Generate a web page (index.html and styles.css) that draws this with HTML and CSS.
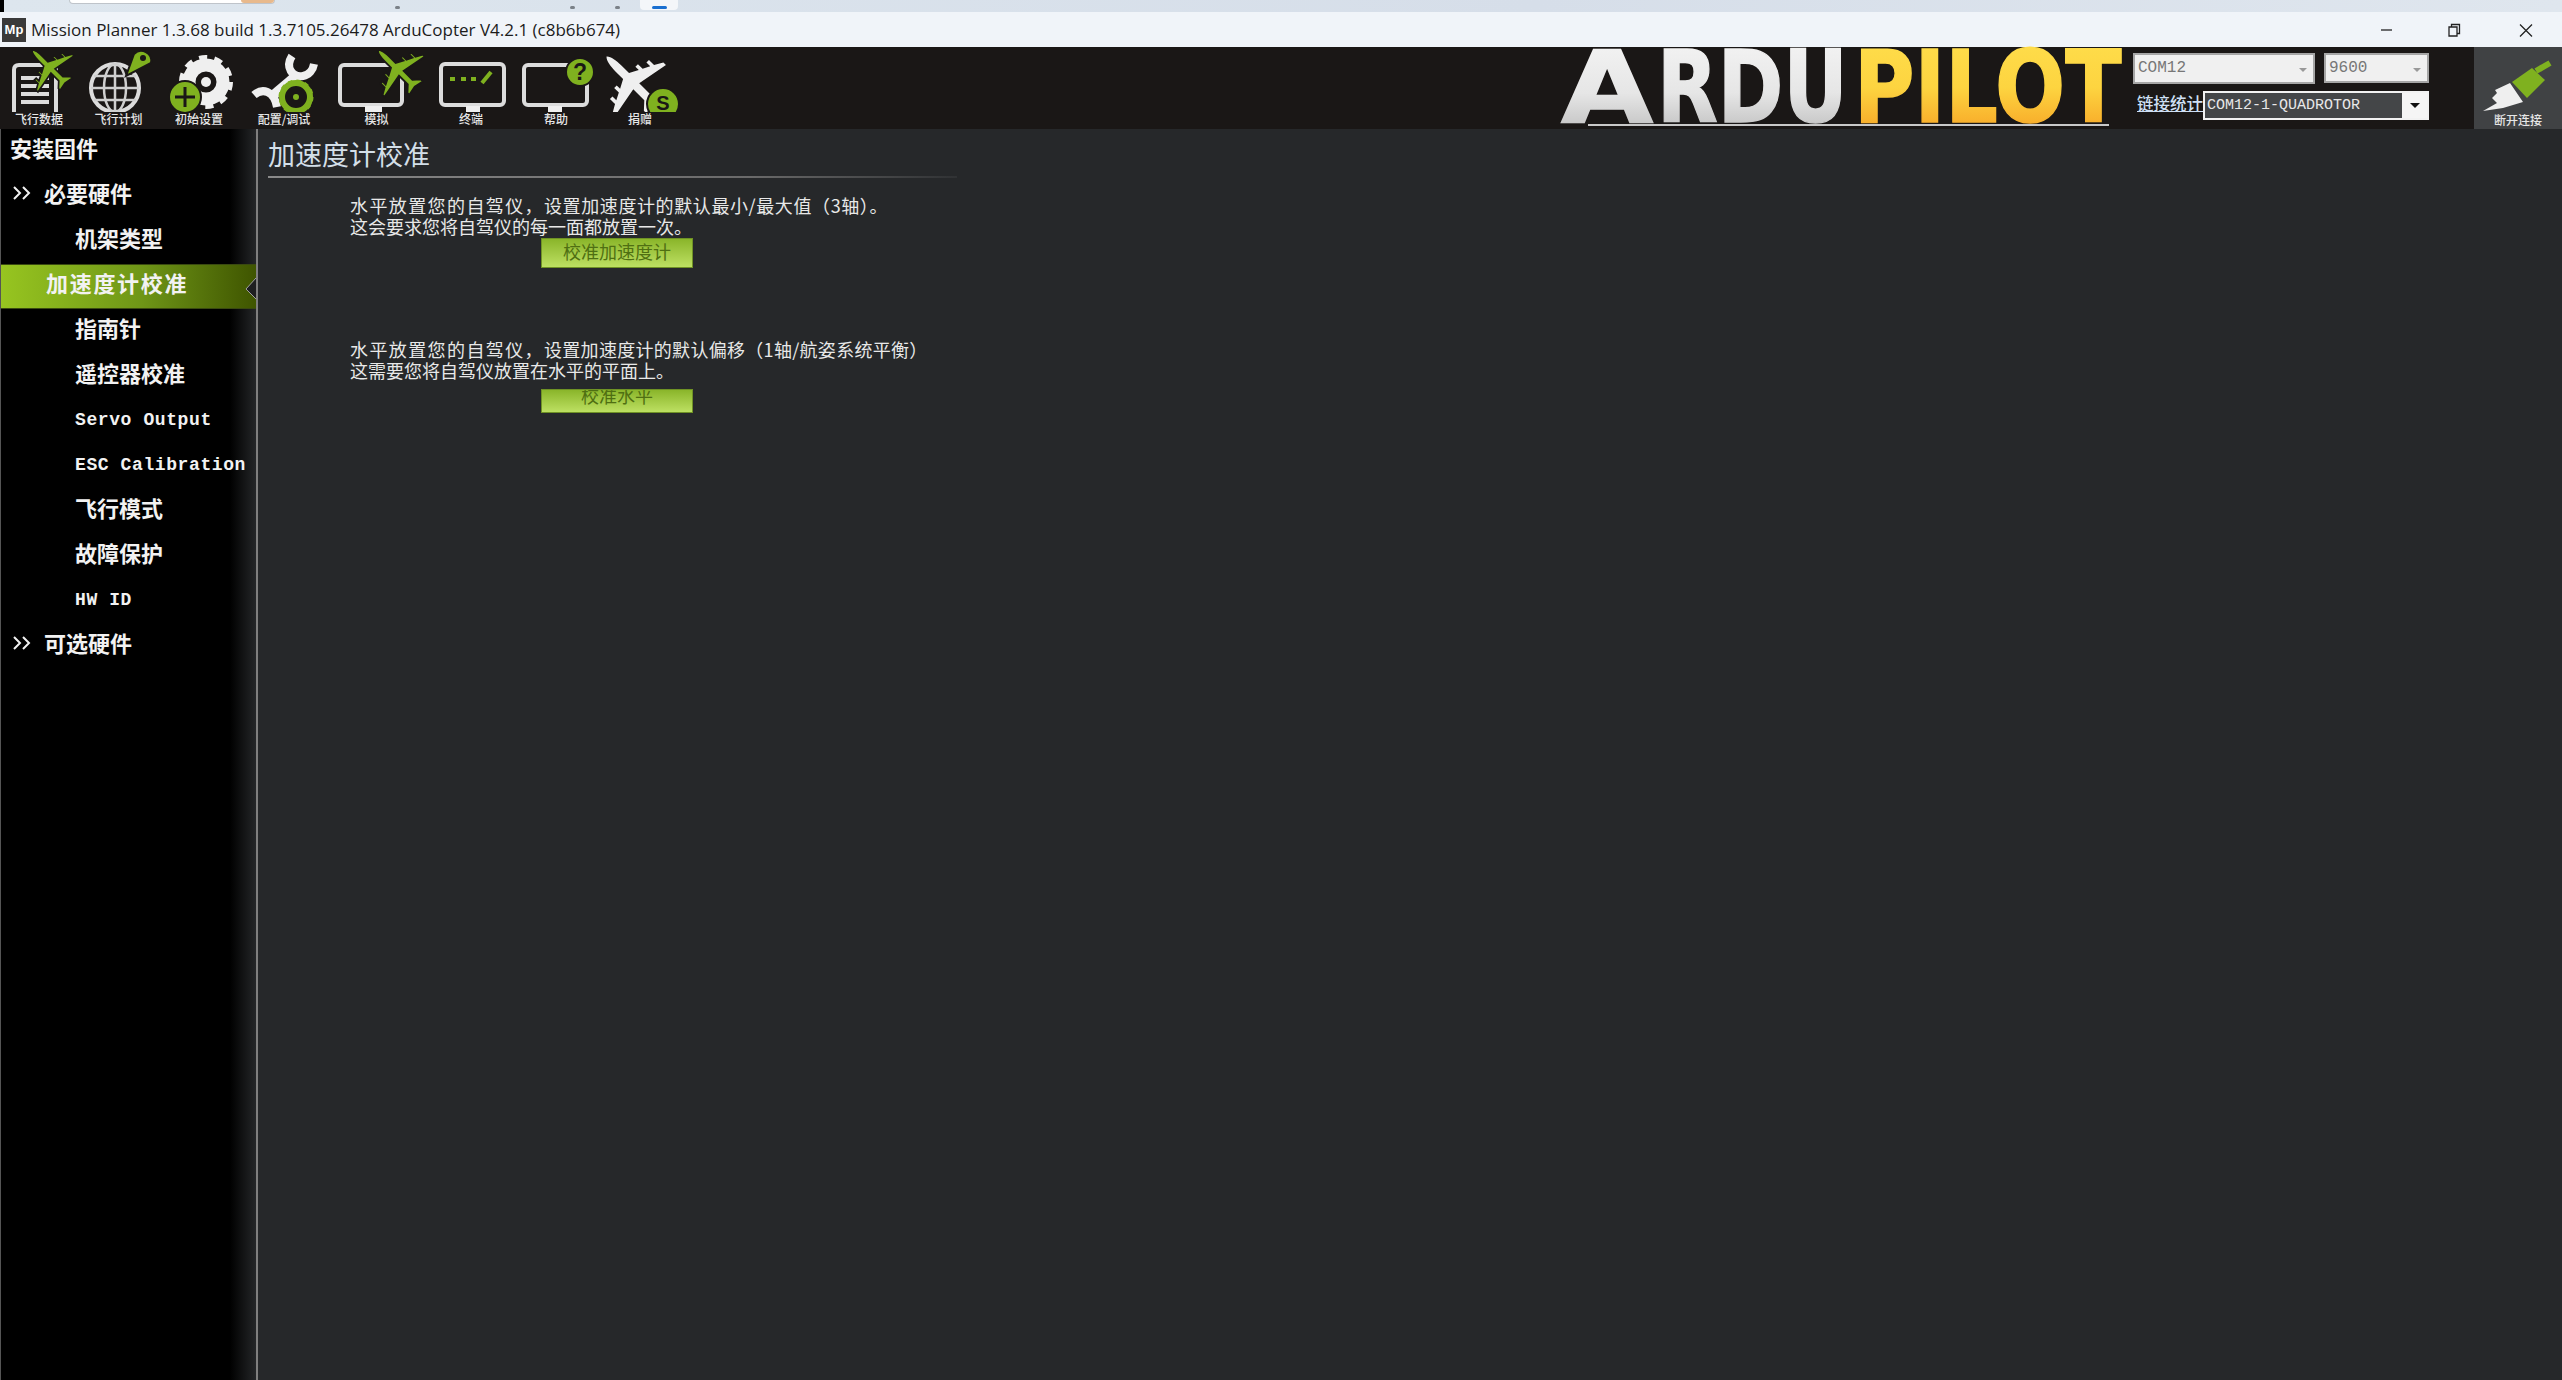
FILE: index.html
```html
<!DOCTYPE html>
<html lang="zh">
<head>
<meta charset="utf-8">
<title>Mission Planner</title>
<link rel="stylesheet" href="styles.css">
</head>
<body>
<div class="app">
  <div class="strip">
    <span class="strip-black"></span>
    <span class="strip-pill"><span class="strip-pill-end"></span></span>
    <span class="strip-dot d1"></span>
    <span class="strip-dot d2"></span>
    <span class="strip-dot d3"></span>
    <span class="strip-tile"><span class="strip-tile-bar"></span></span>
  </div>

  <div class="titlebar">
    <span class="mp-icon">Mp</span>
    <span class="title-text">Mission Planner 1.3.68 build 1.3.7105.26478 ArduCopter V4.2.1 (c8b6b674)</span>
    <span class="win-btns">
      <svg class="win-btn" viewBox="0 0 70 34"><path d="M31 17H42" stroke="#222" stroke-width="1.3"/></svg>
      <svg class="win-btn" viewBox="0 0 70 34"><path d="M29 14h8v9h-8zM31.500 14v-2.500h8v9H37" fill="none" stroke="#222" stroke-width="1.3"/></svg>
      <svg class="win-btn" viewBox="0 0 70 34"><path d="M30 11.500L42 23.500M42 11.500L30 23.500" stroke="#222" stroke-width="1.3"/></svg>
    </span>
  </div>

  <div class="toolbar">
    <svg class="defs" width="0" height="0">
      <defs>
        <path id="plane" d="M0-30C2.500-28 3.500-22 3.500-16V-7L11-3V-7H14V-1.500L20 1.500V-3H23V3L30 7V10L3.500 5V18L10 24V27L0 25L-10 27V24L-3.500 18V5L-30 10V7L-23 3V-3H-20V1.500L-14-1.500V-7H-11V-3L-3.500-7V-16C-3.500-22-2.500-28 0-30Z"/>
        <clipPath id="icon-bottom"><rect x="594" y="47" width="92" height="65"/></clipPath>
        <linearGradient id="white-fill" x1="0" y1="0" x2="0" y2="1">
          <stop offset="0" stop-color="#f6f6f6"/><stop offset=".55" stop-color="#e6e6e6"/><stop offset="1" stop-color="#b4b4b4"/>
        </linearGradient>
        <linearGradient id="gold-fill" x1="0" y1="0" x2="0" y2="1">
          <stop offset="0" stop-color="#ffdf4d"/><stop offset=".5" stop-color="#fdd440"/><stop offset="1" stop-color="#f5981f"/>
        </linearGradient>
      </defs>
    </svg>

    <div class="tools">
      <div class="tool t1">
        <svg class="tool-icon" viewBox="0 47 78 65">
          <path d="M14 112V70Q14 65 19 65H50Q56 65 56 70V112" class="ln"/>
          <path d="M21 78H49M21 86H49M21 94H49M21 102H49" class="ln"/>
          <use href="#plane" transform="translate(50 68) rotate(-45) scale(.85)" class="gr"/>
        </svg>
        <span class="tool-label">飞行数据</span>
      </div>
      <div class="tool t2">
        <svg class="tool-icon" viewBox="78 47 81 65">
          <circle cx="115" cy="88" r="24" class="ln"/>
          <ellipse cx="115" cy="88" rx="11" ry="24" class="ln2"/>
          <path d="M115 64V112M91 88H139M94 76H136M94 100H136" class="ln2"/>
          <path d="M126 76L134 54A10 10 0 0 1 151 63Z" class="gr"/>
          <circle cx="143" cy="58" r="3" class="dk"/>
        </svg>
        <span class="tool-label">飞行计划</span>
      </div>
      <div class="tool t3">
        <svg class="tool-icon" viewBox="159 47 80 65">
          <circle cx="206" cy="82" r="17" class="gear-ring"/>
          <circle cx="206" cy="82" r="24" class="gear-teeth"/>
          <circle cx="206" cy="82" r="5" class="wh"/>
          <circle cx="185" cy="97" r="16" class="gr"/>
          <path d="M185 87V107M175 97H195" class="plus"/>
        </svg>
        <span class="tool-label">初始设置</span>
      </div>
      <div class="tool t4">
        <svg class="tool-icon" viewBox="239 47 90 65">
          <path d="M292 56C285 67 292 78 303 76C309 75 313 70 314 64" class="wr"/>
          <path d="M296 76L270 98" class="wr2"/>
          <path d="M254 95C262 88 274 90 277 107" class="wr"/>
          <circle cx="296" cy="97" r="14" class="gr-ring"/>
          <circle cx="296" cy="97" r="15" class="gr-teeth"/>
          <circle cx="296" cy="97" r="3" class="gr-solid"/>
        </svg>
        <span class="tool-label">配置/调试</span>
      </div>
      <div class="tool t5">
        <svg class="tool-icon" viewBox="329 47 95 65">
          <rect x="340" y="65" width="62" height="40" rx="4" class="ln"/>
          <rect x="365" y="106" width="17" height="7" class="wh"/>
          <use href="#plane" transform="translate(398 70) rotate(-45) scale(.95)" class="gr"/>
        </svg>
        <span class="tool-label">模拟</span>
      </div>
      <div class="tool t6">
        <svg class="tool-icon" viewBox="424 47 94 65">
          <rect x="441" y="64" width="63" height="41" rx="4" class="ln"/>
          <rect x="466" y="106" width="14" height="7" class="wh"/>
          <path d="M450 79H455M461 79H466M471 79H476" class="term"/>
          <path d="M482 83L491 72" class="term"/>
        </svg>
        <span class="tool-label">终端</span>
      </div>
      <div class="tool t7">
        <svg class="tool-icon" viewBox="518 47 76 65">
          <rect x="524" y="65" width="63" height="40" rx="4" class="ln"/>
          <rect x="548" y="106" width="14" height="7" class="wh"/>
          <circle cx="580" cy="72" r="14" class="gr"/>
          <text x="580" y="80" class="help-q">?</text>
        </svg>
        <span class="tool-label">帮助</span>
      </div>
      <div class="tool t8">
        <svg class="tool-icon open" viewBox="594 47 92 65">
          <g clip-path="url(#icon-bottom)">
            <use href="#plane" transform="translate(632 82) rotate(-45) scale(1.2)" class="wh"/>
            <circle cx="663" cy="104" r="16" class="gr"/>
          </g>
          <text x="663" y="110" class="help-s">S</text>
        </svg>
        <span class="tool-label">捐赠</span>
      </div>
    </div>

    <svg class="logo" viewBox="1555 47 575 82">
      <text transform="translate(1561 122) scale(1.19 1)" class="logo-a">A</text>
      <text transform="translate(1657 122) scale(.79 1)" class="logo-a">RDU</text>
      <text transform="translate(1854 122) scale(.826 1)" class="logo-b">PILOT</text>
      <path d="M1588 125H2109" class="logo-line"/>
    </svg>

    <div class="ports">
      <div class="port-row">
        <div class="select com"><span>COM12</span><i class="caret"></i></div>
        <div class="select baud"><span>9600</span><i class="caret"></i></div>
      </div>
      <div class="port-row link-row">
        <span class="link-stats">链接统计</span>
        <div class="combo"><span class="combo-text">COM12-1-QUADROTOR</span><span class="combo-btn"><i class="combo-caret"></i></span></div>
      </div>
    </div>

    <div class="connect">
      <svg class="connect-icon" viewBox="0 0 88 66">
        <path d="M36 36L49 55L29 61L9 64L23 56L18 51L23 46L21 43Z" class="wh"/>
        <path d="M38 35L58 21L71 33L53 51Z" class="gr-solid"/>
        <path d="M62 24L76 16" class="prong"/>
      </svg>
      <span class="tool-label">断开连接</span>
    </div>
  </div>

  <div class="body">
    <nav class="sidebar">
      <div class="item lvl0">安装固件</div>
      <div class="item lvl1"><svg class="chev" viewBox="0 0 18 14"><path d="M1 1L7 7L1 13M10 1L16 7L10 13"/></svg>必要硬件</div>
      <div class="item lvl2">机架类型</div>
      <div class="item active">加速度计校准
        <svg class="notch" viewBox="0 0 11 23"><path d="M11 1L1 12L11 22"/></svg>
      </div>
      <div class="item lvl2">指南针</div>
      <div class="item lvl2">遥控器校准</div>
      <div class="item lvl2 en">Servo Output</div>
      <div class="item lvl2 en">ESC Calibration</div>
      <div class="item lvl2">飞行模式</div>
      <div class="item lvl2">故障保护</div>
      <div class="item lvl2 en">HW ID</div>
      <div class="item lvl1"><svg class="chev" viewBox="0 0 18 14"><path d="M1 1L7 7L1 13M10 1L16 7L10 13"/></svg>可选硬件</div>
    </nav>
    <main class="main">
      <h1 class="page-title">加速度计校准</h1>
      <div class="rule"></div>
      <section class="block first">
        <p class="desc"><span class="spread-a"><span class="spread-lead">水平放置您的自驾仪，</span>设置加速度计的默认最小/最大值（3轴）。</span><br>这会要求您将自驾仪的每一面都放置一次。</p>
        <button class="btn tall">校准加速度计</button>
      </section>
      <section class="block second">
        <p class="desc"><span class="spread-b"><span class="spread-lead">水平放置您的自驾仪，</span>设置加速度计的默认偏移（1轴/航姿系统平衡）</span><br>这需要您将自驾仪放置在水平的平面上。</p>
        <button class="btn short">校准水平</button>
      </section>
    </main>
  </div>
</div>
</body>
</html>
```

FILE: styles.css
```css
* { box-sizing: border-box; }
html, body { margin: 0; padding: 0; height: 100%; overflow: hidden; }
body { font-family: "Noto Sans CJK SC", "Noto Sans", sans-serif; background: #26282a; }
.app { display: flex; flex-direction: column; height: 1380px; width: 2562px; }

/* desktop strip behind the window */
.strip { height: 12px; flex: none; display: flex; align-items: flex-start; background: linear-gradient(90deg, #dde6ee, #d6dee9 60%, #dfe6ee); }
.strip-black { width: 4px; height: 12px; background: #000; }
.strip-pill { margin-left: 65px; width: 206px; height: 4px; background: #fff; border: 1px solid #bfc4ca; border-top: 0; border-radius: 0 0 6px 6px; display: flex; justify-content: flex-end; }
.strip-pill-end { width: 33px; height: 3px; background: #e8b98c; border-radius: 0 0 5px 5px; }
.strip-dot { width: 5px; height: 3px; margin-top: 6px; background: #7b8188; border-radius: 2px; }
.d1 { margin-left: 120px; }
.d2 { margin-left: 170px; }
.d3 { margin-left: 40px; }
.strip-tile { margin-left: 20px; width: 38px; height: 10px; background: #f4f6f9; border-radius: 0 0 4px 4px; display: flex; justify-content: center; align-items: flex-end; padding-bottom: 1px; }
.strip-tile-bar { width: 15px; height: 3px; background: #1a6fd0; border-radius: 2px; }

/* title bar */
.titlebar { height: 35px; flex: none; display: flex; align-items: center; background: #f0f4f9; padding-left: 2px; }
.mp-icon { width: 24px; height: 24px; background: #3a3a3a; color: #fff; font: 700 13px/24px "Liberation Sans", sans-serif; text-align: center; }
.title-text { margin-left: 5px; font: 400 17px/24px "Open Sans", sans-serif; color: #1c1c1c; white-space: nowrap; }
.win-btns { margin-left: auto; display: flex; margin-right: 2px; }
.win-btn { width: 70px; height: 34px; display: block; }

/* toolbar */
.toolbar { height: 82px; flex: none; display: flex; background: #1a1716; }
.defs { position: absolute; }
.tools { display: flex; flex: 1; }
.tool { display: flex; flex-direction: column; align-items: center; flex: none; }
.t1 { width: 78px; } .t2 { width: 81px; } .t3 { width: 80px; } .t4 { width: 90px; }
.t5 { width: 95px; } .t6 { width: 94px; } .t7 { width: 76px; } .t8 { width: 92px; }
.tool-icon { display: block; width: 100%; height: 65px; }
.tool-icon.open { overflow: visible; }
.tool-label { font-size: 12px; line-height: 14px; font-weight: 500; color: #e6e6e6; white-space: nowrap; }

.ln { fill: none; stroke: #dcdcdc; stroke-width: 4; }
.ln2 { fill: none; stroke: #cfcfcf; stroke-width: 2.500; }
.gr { fill: #7fb11f; stroke: #1a1716; stroke-width: 2; }
.gr-solid { fill: #7fb11f; }
.wh { fill: #efefef; }
.dk { fill: #1a1716; }
.gear-ring { fill: none; stroke: #efefef; stroke-width: 13; }
.gear-teeth { fill: none; stroke: #efefef; stroke-width: 6; stroke-dasharray: 8 7.080; }
.plus { stroke: #1a1716; stroke-width: 3; fill: none; }
.wr { fill: none; stroke: #efefef; stroke-width: 8; }
.wr2 { fill: none; stroke: #efefef; stroke-width: 10; }
.gr-ring { fill: #1a1716; stroke: #7fb11f; stroke-width: 6; }
.gr-teeth { fill: none; stroke: #7fb11f; stroke-width: 5; stroke-dasharray: 4 3.850; }
.term { stroke: #7fb11f; stroke-width: 4; fill: none; }
.help-q { font: 700 23px "Liberation Sans", sans-serif; fill: #1a1716; text-anchor: middle; }
.help-s { font: 700 20px "Liberation Sans", sans-serif; fill: #1a1716; text-anchor: middle; }

/* logo */
.logo { display: block; width: 575px; height: 82px; flex: none; overflow: visible; }
.logo-a, .logo-b { font: 700 100px "DejaVu Sans", sans-serif; stroke-width: 1.500; }
.logo-a { fill: url(#white-fill); stroke: url(#white-fill); }
.logo-b { fill: url(#gold-fill); stroke: url(#gold-fill); }
.logo-line { stroke: #c8c8c8; stroke-width: 2; }

/* port selectors */
.ports { width: 296px; margin-left: 3px; padding-top: 6px; flex: none; font-family: "Liberation Mono", monospace; }
.port-row { display: flex; gap: 9px; }
.select { height: 31px; background: #f0f0f0; border: 2px solid #a6a6a6; color: #777; font-size: 16px; line-height: 27px; padding-left: 3px; display: flex; justify-content: space-between; }
.com { width: 182px; }
.baud { width: 105px; height: 30px; }
.caret { width: 0; height: 0; margin: 13px 6px 0 0; border: 4px solid transparent; border-top-color: #999; border-bottom: 0; }
.link-row { margin-top: 7px; gap: 0; align-items: flex-start; }
.link-stats { margin-left: 4px; width: 66px; height: 24px; overflow: hidden; font: 500 16.500px/24px "Noto Sans CJK SC", sans-serif; color: #cfe0f5; text-decoration: underline; white-space: nowrap; flex: none; }
.combo { width: 226px; height: 29px; border: 2px solid #f2f2f2; background: #444648; display: flex; justify-content: space-between; flex: none; }
.combo-text { color: #e8e8e8; font-size: 15px; line-height: 25px; padding-left: 2px; white-space: nowrap; }
.combo-btn { width: 25px; background: #f5f5f5; display: flex; align-items: center; justify-content: center; }
.combo-caret { width: 0; height: 0; border: 5px solid transparent; border-top-color: #111; border-bottom: 0; }

.connect { width: 88px; margin-left: 45px; flex: none; background: #404244; display: flex; flex-direction: column; align-items: center; }
.connect-icon { display: block; width: 88px; height: 66px; }
.prong { stroke: #7fb11f; stroke-width: 6; fill: none; }

/* body */
.body { flex: 1; display: flex; min-height: 0; }
.sidebar { width: 258px; flex: none; border-left: 1px solid #555; border-right: 2px solid #7f7f7f; background: linear-gradient(90deg, #000 229px, #242628 255px); }
.item { position: relative; height: 45px; line-height: 37px; padding-bottom: 8px; font-size: 22px; font-weight: 700; color: #f2f2f2; white-space: nowrap; display: flex; align-items: center; }
.lvl0 { padding-left: 9px; }
.lvl1 { padding-left: 12px; }
.lvl2 { padding-left: 74px; }
.en { font-family: "Liberation Mono", monospace; font-size: 18px; letter-spacing: .6px; padding-bottom: 3px; line-height: 42px; }
.chev { width: 18px; height: 14px; margin-right: 13px; flex: none; }
.chev path { fill: none; stroke: #f2f2f2; stroke-width: 2; }
.active { padding-left: 45px; letter-spacing: 1.700px; background: linear-gradient(90deg, #97c520, #6f9617 55%, #3f5500); border-top: 1px solid #3a4a10; border-bottom: 1px solid #3a4a10; }
.notch { position: absolute; right: 0; top: 12px; width: 11px; height: 23px; }
.notch path { fill: #1e1f20; stroke: #a0a0a0; stroke-width: 1; }

/* main panel */
.main { flex: 1; background: #26282a; padding-left: 10px; }
.page-title { margin: 0; padding-top: 2px; font-size: 27px; line-height: 45px; font-weight: 400; color: #d3dfe8; }
.rule { height: 2px; width: 689px; background: linear-gradient(90deg, #8a8a8a, #6a6a6a 70%, #303234); }
.block { padding-left: 82px; }
.first { margin-top: 17px; }
.second { margin-top: 71px; }
.desc { margin: 0; font-size: 18px; line-height: 21px; color: #e8e8e8; white-space: nowrap; }
.spread-a { letter-spacing: .6px; }
.spread-b { letter-spacing: .3px; }
.spread-lead { letter-spacing: 1.400px; }
.btn { display: block; width: 152px; margin-left: 191px; overflow: hidden; border: 1px solid #6f9225; background: linear-gradient(180deg, #8ab52a, #bde062); color: #4f6f12; font-family: inherit; font-size: 18px; text-align: center; }
.tall { height: 30px; margin-top: 1px; line-height: 24px; padding: 0 0 4px; }
.short { height: 24px; margin-top: 8px; line-height: 10px; padding: 0 0 12px; }
```
